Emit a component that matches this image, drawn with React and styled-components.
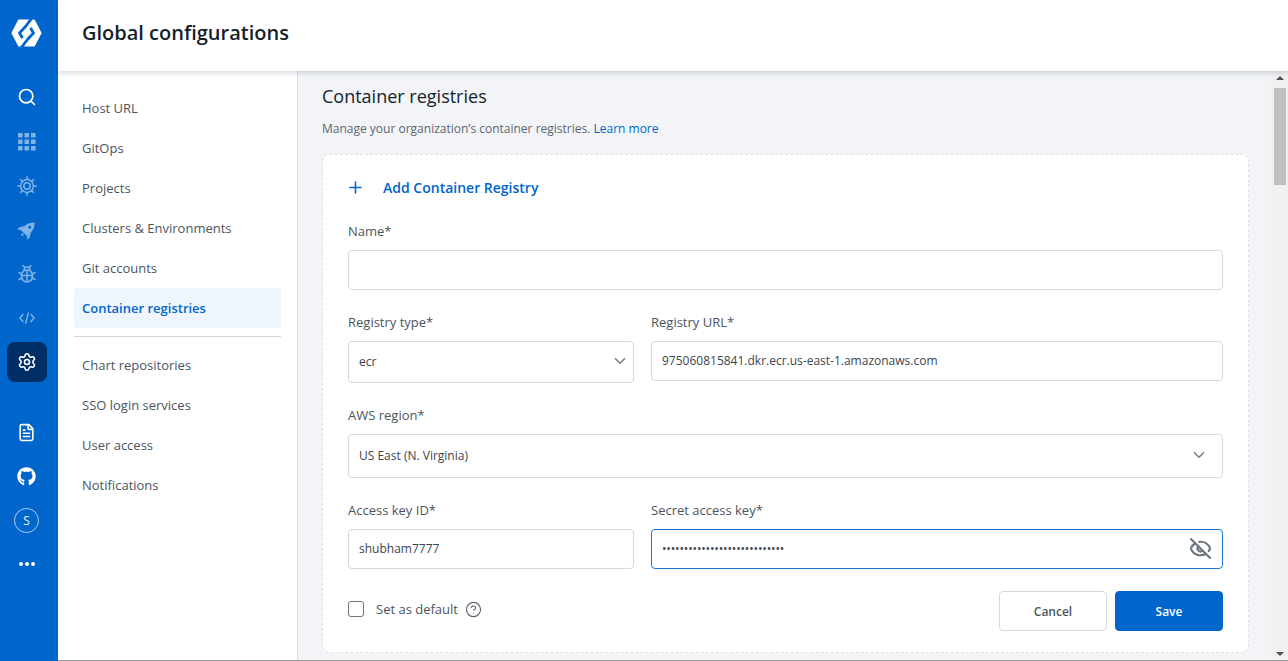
import React from 'react'
import styled, { createGlobalStyle } from 'styled-components'
import { Search, Settings, FileText, Plus, ChevronDown, EyeOff, CircleHelp } from 'lucide-react'
import { FaGithub } from 'react-icons/fa'

const GlobalStyle = createGlobalStyle`
html, body {
    margin: 0;
    height: 100%;
    overflow: hidden;
    font-family: "Open Sans", "Noto Sans", sans-serif;
}
#root {
    height: 100%;
}
* {
    box-sizing: border-box;
}
`

const topNav = ['Host URL', 'GitOps', 'Projects', 'Clusters & Environments', 'Git accounts', 'Container registries']
const bottomNav = ['Chart repositories', 'SSO login services', 'User access', 'Notifications']

const Logo = () => (
    <svg width="31" height="28" viewBox="0 0 31 28">
        <path d="M8 1.500h15L29.500 14 23 26.500H8L1.500 14z" fill="#fff" stroke="#fff" strokeWidth="2" strokeLinejoin="round" />
        <g fill="none" stroke="#0066cc" strokeWidth="2.800" strokeLinejoin="round">
            <path d="M21 -1L14.500 7.500 8.500 14l3 5" />
            <path d="M10 29l6.500-8.500 6-6.500-3-5" />
        </g>
    </svg>
)

const GridIcon = () => (
    <svg width="18" height="18" viewBox="0 0 18 18" fill="currentColor">
        {[0, 6.5, 13].map(x => [0, 6.5, 13].map(y => <rect key={`${x}-${y}`} x={x} y={y} width="4.6" height="4.6" rx="0.6" />))}
    </svg>
)

const WheelIcon = () => (
    <svg width="20" height="20" viewBox="0 0 20 20" fill="none" stroke="currentColor" strokeWidth="1.5" strokeLinecap="round">
        <circle cx="10" cy="10" r="6.4" />
        <circle cx="10" cy="10" r="3.2" />
        <path d="M10 .8v2.600M10 16.600v2.600M.8 10h2.600M16.600 10h2.600M3.500 3.500l1.900 1.900M14.600 14.600l1.900 1.900M3.500 16.500l1.900-1.900M14.600 5.400l1.900-1.900" />
    </svg>
)

const RocketIcon = () => (
    <svg width="20" height="20" viewBox="0 0 18 18">
        <g transform="rotate(45 9 9)" fill="currentColor">
            <path d="M9-.5c4 3 4.500 8.500 4 13.500H5C4.500 8 5 2.500 9-.5z" />
            <path d="M5 8l-2.500 4v3L5 13zM13 8l2.500 4v3L13 13zM7.500 14h3L9 16.500z" />
            <circle cx="9" cy="5.500" r="1.300" fill="#0066cc" />
        </g>
    </svg>
)

const BugIcon = () => (
    <svg width="20" height="20" viewBox="0 0 20 20" fill="none" stroke="currentColor" strokeWidth="1.500" strokeLinecap="round">
        <path d="M7 6a3 3 0 0 1 6 0" />
        <path d="M6 1.500l1.800 1.800M14 1.500l-1.800 1.800" />
        <rect x="4.500" y="6" width="11" height="12" rx="5.500" />
        <path d="M10 6.500v11M4.500 11.500h11M2 8.500L4.500 10M18 8.500L15.500 10M2 15.500L5 14M18 15.500L15 14" />
    </svg>
)

const CodeIcon = () => (
    <svg width="16" height="12" viewBox="0 0 16 12" fill="none" stroke="currentColor" strokeWidth="1.4" strokeLinecap="round" strokeLinejoin="round">
        <path d="M4 2.500L.9 6 4 9.500M12 2.500L15.100 6 12 9.500M9.300 1L6.700 11" />
    </svg>
)

export default function App() {
    return (
        <Page>
            <GlobalStyle />
            <Rail>
                <LogoSlot><Logo /></LogoSlot>
                <RailButton $bright $top={20}><Search size={20} strokeWidth={2} /></RailButton>
                <RailButton $top={1}><GridIcon /></RailButton>
                <RailButton><WheelIcon /></RailButton>
                <RailButton><RocketIcon /></RailButton>
                <RailButton><BugIcon /></RailButton>
                <RailButton><CodeIcon /></RailButton>
                <ActiveRailButton><Settings size={20} strokeWidth={1.9} /></ActiveRailButton>
                <RailButton $bright $top={28}><FileText size={19} strokeWidth={2} /></RailButton>
                <RailButton $bright><FaGithub size={19} /></RailButton>
                <RailButton $bright><Avatar>S</Avatar></RailButton>
                <RailButton $bright><Dots><i /><i /><i /></Dots></RailButton>
            </Rail>
            <Body>
                <Header>Global configurations</Header>
                <Columns>
                    <SideNav>
                        {topNav.map(item => (
                            <NavItem key={item} $active={item === 'Container registries'}>{item}</NavItem>
                        ))}
                        <NavDivider />
                        {bottomNav.map(item => <NavItem key={item}>{item}</NavItem>)}
                    </SideNav>
                    <Main>
                        <Title>Container registries</Title>
                        <Subtitle>Manage your organization’s container registries. <a>Learn more</a></Subtitle>
                        <Card>
                            <AddRow><Plus size={19} strokeWidth={2} />Add Container Registry</AddRow>
                            <Field>
                                <Label>Name*</Label>
                                <Input />
                            </Field>
                            <Row>
                                <Field $width="286px">
                                    <Label>Registry type*</Label>
                                    <Select $h={42} $pr={4}>ecr<ChevronDown size={18} strokeWidth={2.2} /></Select>
                                </Field>
                                <Field>
                                    <Label>Registry URL*</Label>
                                    <Input>975060815841.dkr.ecr.us-east-1.amazonaws.com</Input>
                                </Field>
                            </Row>
                            <Field>
                                <Label>AWS region*</Label>
                                <Select $h={44} $pr={14}>US East (N. Virginia)<ChevronDown size={18} strokeWidth={2.2} /></Select>
                            </Field>
                            <Row>
                                <Field $width="286px">
                                    <Label>Access key ID*</Label>
                                    <Input>shubham7777</Input>
                                </Field>
                                <Field>
                                    <Label>Secret access key*</Label>
                                    <Input $focused>
                                        <Secret>{'•'.repeat(28)}</Secret>
                                        <EyeOff size={23} color="#6b7480" strokeWidth={2.2} />
                                    </Input>
                                </Field>
                            </Row>
                            <Footer>
                                <DefaultToggle>
                                    <Checkbox />
                                    Set as default
                                    <CircleHelp size={17} color="#5c6570" strokeWidth={1.6} />
                                </DefaultToggle>
                                <Actions>
                                    <CancelButton>Cancel</CancelButton>
                                    <SaveButton>Save</SaveButton>
                                </Actions>
                            </Footer>
                        </Card>
                    </Main>
                    <Scrollbar>
                        <Arrow />
                        <Thumb />
                        <Spacer />
                        <Arrow $down />
                    </Scrollbar>
                </Columns>
            </Body>
        </Page>
    )
}

const Page = styled.div`
display: flex;
height: 661px;
width: 1288px;
overflow: hidden;
background: #f2f4f7;
`

const Rail = styled.nav`
width: 58px;
flex: none;
background: #0066cc;
display: flex;
flex-direction: column;
align-items: center;
padding-right: 5px;
`

const LogoSlot = styled.div`
height: 44px;
margin-top: 11px;
display: flex;
align-items: center;
justify-content: center;
color: #fff;
`

const RailButton = styled.div`
width: 40px;
height: 44px;
margin-top: ${p => p.$top || 0}px;
display: flex;
align-items: center;
justify-content: center;
color: ${p => p.$bright ? '#fff' : '#7fb2e5'};
`

const ActiveRailButton = styled.div`
width: 40px;
height: 40px;
margin-top: 2px;
border-radius: 8px;
background: #002f66;
color: #fff;
display: flex;
align-items: center;
justify-content: center;
`

const Avatar = styled.div`
width: 25px;
height: 25px;
border-radius: 50%;
border: 1px solid #a8d0f5;
font-size: 12px;
color: #e5f2ff;
display: flex;
align-items: center;
justify-content: center;
`

const Dots = styled.div`
display: flex;
gap: 2px;
i {
    width: 4px;
    height: 4px;
    border-radius: 50%;
    background: #fff;
}
`

const Body = styled.div`
flex: 1;
min-width: 0;
display: flex;
flex-direction: column;
`

const Header = styled.header`
height: 71px;
flex: none;
background: #fff;
box-shadow: 0 2px 5px rgba(0, 20, 60, 0.16);
position: relative;
z-index: 1;
padding: 0 0 6px 24px;
display: flex;
align-items: center;
font-size: 20px;
font-weight: 600;
color: #151f2b;
`

const Columns = styled.div`
flex: 1;
min-height: 0;
display: flex;
border-bottom: 1px solid #9a9a9a;
`

const SideNav = styled.aside`
width: 240px;
flex: none;
background: #fff;
border-right: 1px solid #d8dce1;
padding: 17px 16px 0;
`

const NavItem = styled.div`
height: 40px;
display: flex;
align-items: center;
padding-left: 8px;
border-radius: 4px;
font-size: 13px;
font-weight: ${p => p.$active ? 600 : 400};
color: ${p => p.$active ? '#0066cc' : '#4b5560'};
background: ${p => p.$active ? '#eef5fd' : 'transparent'};
`

const NavDivider = styled.div`
height: 1px;
background: #d0d4d9;
margin: 8px 0 8px;
`

const Main = styled.main`
flex: 1;
min-width: 0;
padding: 12px 22px 0 24px;
`

const Title = styled.h1`
margin: 0;
font-size: 18px;
line-height: 26px;
font-weight: 500;
color: #151f2b;
`

const Subtitle = styled.p`
margin: 10px 0 0;
font-size: 12px;
line-height: 20px;
color: #5c6670;
a {
    color: #0066cc;
}
`

const Card = styled.section`
margin-top: 15px;
height: 499px;
background: #fff;
border: 1px dashed #dde1e6;
border-radius: 8px;
padding: 22px 25px 0 25px;
`

const AddRow = styled.div`
display: flex;
align-items: center;
gap: 18px;
height: 20px;
margin-left: -2px;
font-size: 14px;
font-weight: 600;
color: #0066cc;
margin-bottom: 25px;
`

const Row = styled.div`
display: flex;
gap: 17px;
`

const Field = styled.div`
flex: ${p => p.$width ? 'none' : 1};
width: ${p => p.$width || 'auto'};
min-width: 0;
margin-bottom: 23px;
`

const Label = styled.div`
font-size: 13px;
line-height: 18px;
color: #4b5560;
margin-bottom: 10px;
`

const Input = styled.div`
height: 40px;
display: flex;
align-items: center;
justify-content: space-between;
padding: 0 10px 2px;
background: #fff;
border: 1px solid ${p => p.$focused ? '#1a76d2' : '#d6dade'};
border-radius: 4px;
font-size: 12px;
color: #3b444e;
`

const Select = styled(Input)`
height: ${p => p.$h}px;
padding-right: ${p => p.$pr}px;
svg {
    color: #7a838c;
}
`

const Secret = styled.span`
font-size: 12px;
letter-spacing: -0.15px;
`

const Footer = styled.div`
display: flex;
justify-content: space-between;
align-items: flex-start;
margin-top: -1px;
`

const DefaultToggle = styled.label`
display: flex;
align-items: center;
height: 36px;
font-size: 13px;
color: #4b5560;
svg {
    margin-left: 7px;
}
`

const Checkbox = styled.span`
width: 16px;
height: 16px;
border: 1px solid #6b7480;
border-radius: 3px;
margin-right: 12px;
`

const Actions = styled.div`
display: flex;
gap: 8px;
`

const CancelButton = styled.button`
width: 108px;
height: 40px;
background: #fff;
border: 1px solid #d6dade;
border-radius: 4px;
font-family: inherit;
font-size: 12px;
font-weight: 600;
color: #4b5560;
`

const SaveButton = styled(CancelButton)`
background: #0066cc;
border-color: #0066cc;
color: #fff;
`

const Scrollbar = styled.div`
width: 17px;
flex: none;
background: #f1f1f1;
display: flex;
flex-direction: column;
align-items: center;
padding: 5px 0 4px;
`

const Arrow = styled.div`
width: 0;
height: 0;
border-left: 4px solid transparent;
border-right: 4px solid transparent;
border-${p => p.$down ? 'top' : 'bottom'}: 4px solid #505050;
`

const Thumb = styled.div`
width: 12px;
height: 97px;
margin-top: 8px;
background: #c1c1c1;
`

const Spacer = styled.div`
flex: 1;
`
